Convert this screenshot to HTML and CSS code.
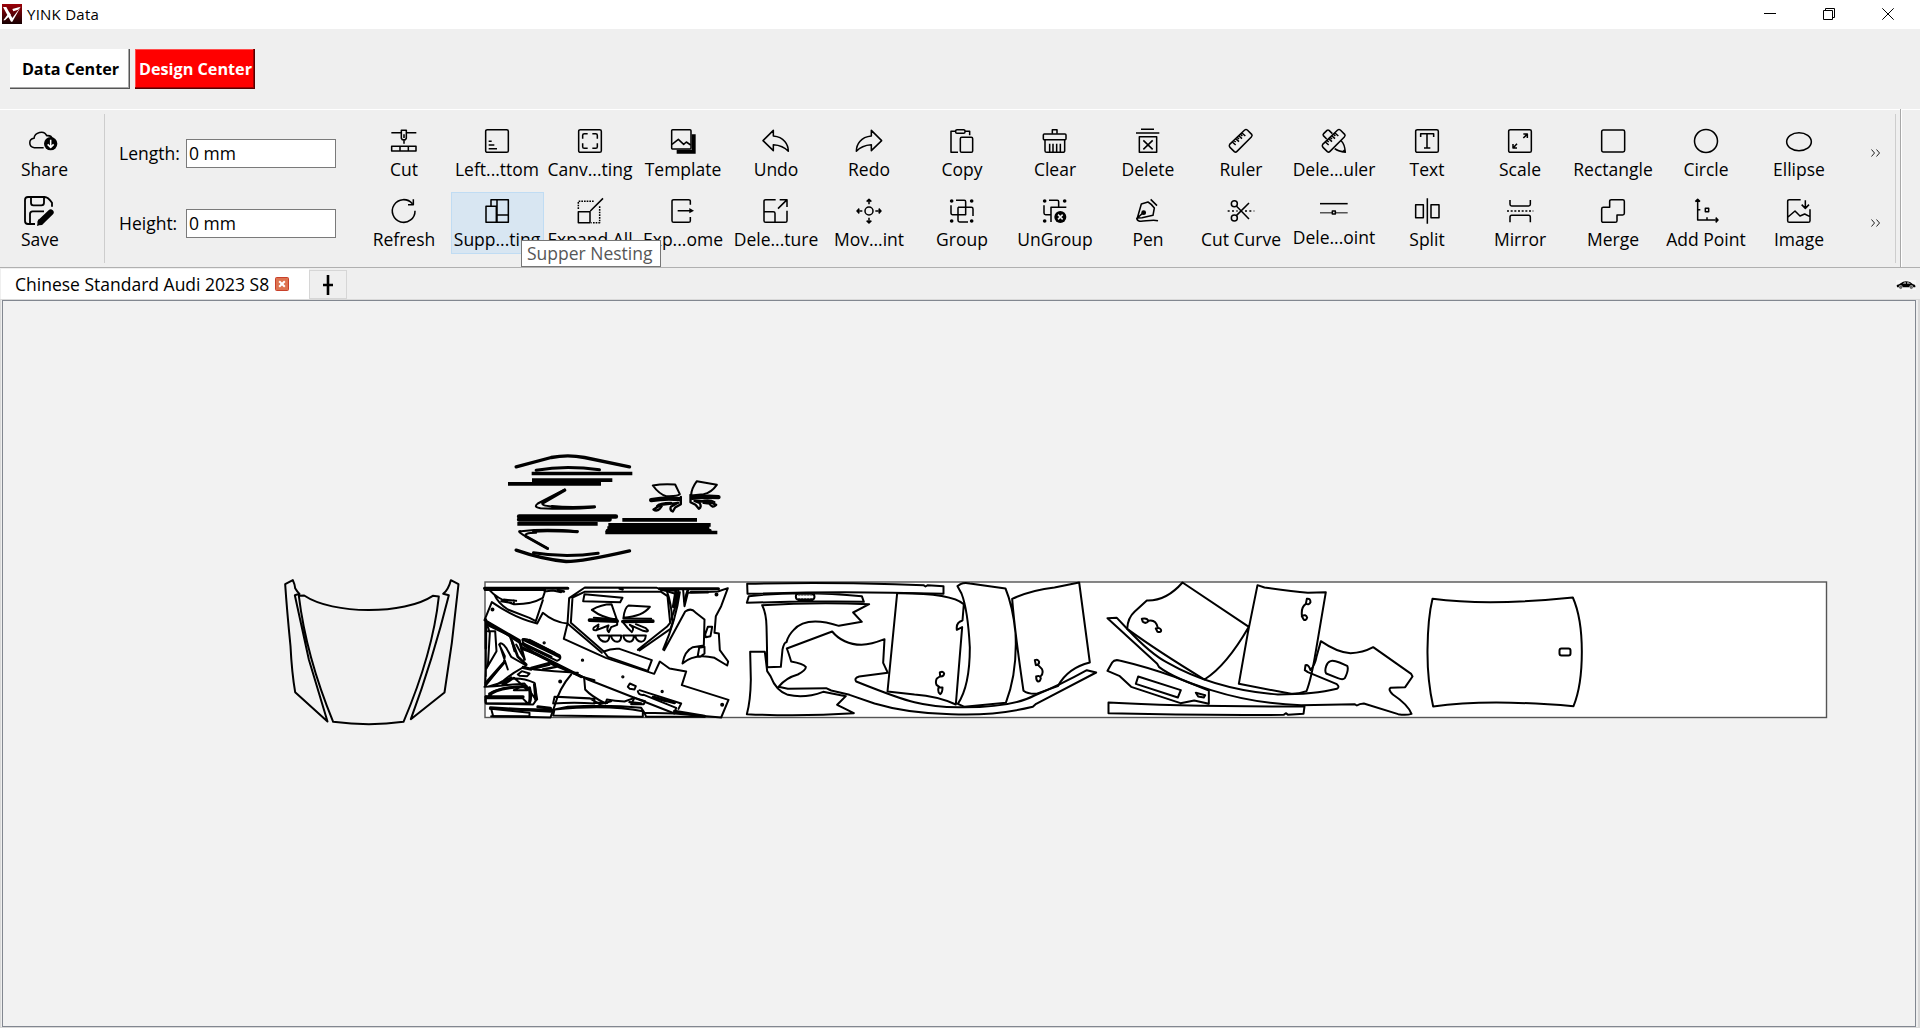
FILE: index.html
```html
<!DOCTYPE html>
<html lang="en">
<head>
<meta charset="utf-8">
<title>YINK Data</title>
<link rel="stylesheet" href="styles.css">
</head>
<body>
<header class="titlebar">
  <svg class="logo" viewBox="0 0 60 60"><defs><linearGradient id="lg" x2="0" y2="1"><stop stop-color="#9c0008"/><stop offset="1" stop-color="#160002"/></linearGradient></defs><rect width="60" height="60" fill="url(#lg)"/><path d="M3 9 L13 9 L31 42 L56 9 L31 53 L27 53Z M31 15 L56 8 L48 17 L34 22Z M22 25 L27 32 L9 49 L4 49Z" fill="#fff"/></svg>
  <span class="app-name">YINK Data</span>
  <div class="window-controls">
    <svg viewBox="0 0 12 12"><path d="M0 5.5H12"/></svg>
    <svg viewBox="0 0 12 12"><path d="M.5 2.5H9.5V11.5H.5ZM2.5 2.5V.5H11.5V9.5H9.5"/></svg>
    <svg viewBox="0 0 12 12"><path d="M.3 .3L11.7 11.7M11.7 .3L.3 11.7"/></svg>
  </div>
</header>
<nav class="modes">
  <button class="mode">Data Center</button>
  <button class="mode active">Design Center</button>
</nav>
<section class="toolbar">
  <div class="file-tools">
    <div class="file-tool share"><svg class="ico" viewBox="0 0 90 60"><path d="M44 50H16C-2 48 -2 24 15 22C17 4 45 -4 53 14C63 13 69 18 70 25"/><circle cx="65" cy="38" r="20" fill="#000" stroke="none"/><path d="M65 26V48M56 40L65 49L74 40" stroke="#fff"/></svg><span>Share</span></div>
    <div class="file-tool save"><svg class="ico" viewBox="0 0 90 90"><path d="M33 84H12Q3 84 3 75V12Q3 3 12 3H62Q72 3 84 20V32M21 4V20Q21 28 28 28H52Q60 28 60 20V4M18 83V54Q18 46 26 46H60" stroke-width="5.5"/><path d="M50 78L80 49" stroke-width="18" stroke-linecap="round"/><path d="M39 90L43 70L58 84Z" fill="#000" stroke="none"/></svg><span>Save</span></div>
  </div>
  <div class="dims">
    <label><span>Length:</span><input value="0 mm"></label>
    <label><span>Height:</span><input value="0 mm"></label>
  </div>
  <div class="tools">
    <div class="tool"><svg class="ico" viewBox="0 0 72 72"><path d="M-2 11H27M44 11H73M28 4H43V28L40 32H31L28 28ZM36 16V27M36 33V44M-1 52H72V66H-1ZM24 52V66M49 52V66"/></svg><span>Cut</span></div>
    <div class="tool"><svg class="ico" viewBox="0 0 72 72"><rect x="2" y="2" width="68" height="68" rx="5"/><path d="M11 37H20M11 48H28M11 59H36"/></svg><span>Left...ttom</span></div>
    <div class="tool"><svg class="ico" viewBox="0 0 72 72"><rect x="2" y="2" width="68" height="68" rx="5"/><path d="M14 29V19Q14 14 19 14H29M43 14H53Q58 14 58 19V29M58 43V53Q58 58 53 58H43M29 58H19Q14 58 14 53V43"/></svg><span>Canv...ting</span></div>
    <div class="tool"><svg class="ico" viewBox="0 0 72 72"><rect x="2" y="2" width="58" height="58" rx="3"/><path d="M3 46L22 31L38 46L46 39L59 48"/><path d="M62 16H74V74H17V62H62Z" fill="#000" stroke="none"/></svg><span>Template</span></div>
    <div class="tool"><svg class="ico" viewBox="0 0 72 72"><path d="M-3 35L28 4V21C60 24 73 46 73 67C60 52 45 48 28 47V65Z"/></svg><span>Undo</span></div>
    <div class="tool"><svg class="ico" viewBox="0 0 72 72"><path d="M74 35L43 4V21C11 24 -2 46 -2 67C11 52 26 48 43 47V65Z"/></svg><span>Redo</span></div>
    <div class="tool"><svg class="ico" viewBox="0 0 72 72"><path d="M24 70H3V7H17M45 7H59V19"/><rect x="17" y="2" width="28" height="11" rx="4"/><rect x="31" y="25" width="37" height="45" rx="4"/></svg><span>Copy</span></div>
    <div class="tool"><svg class="ico" viewBox="0 0 72 72"><path d="M28 14V2H42V14M6 32V65Q6 70 11 70H59Q65 70 65 65V32M20 44V68M30 44V68M41 44V68M52 44V68"/><rect x="1" y="15" width="68" height="17" rx="3"/></svg><span>Clear</span></div>
    <div class="tool"><svg class="ico" viewBox="0 0 72 72"><path d="M15 1H54M0 12H70M10 23H62V70H10ZM22 34L50 61M50 34L22 61"/></svg><span>Delete</span></div>
    <div class="tool"><svg class="ico" viewBox="0 0 72 72"><path d="M2 46L47 3Q51 0 55 3L68 16Q71 20 67 24L24 67Q20 71 16 68L3 55Q-1 51 2 46ZM10 39L20 48M20 29L30 38M30 21L39 29M39 12L49 21M15 34L20 39M25 25L30 30M35 16L40 21"/></svg><span>Ruler</span></div>
    <div class="tool"><svg class="ico" viewBox="0 0 72 72"><path d="M2 46L47 3Q51 0 55 3L68 16Q71 20 67 24L24 67Q20 71 16 68L3 55Q-1 51 2 46ZM10 39L20 48M20 29L30 38M30 21L39 29M39 12L49 21M15 34L20 39M25 25L30 30M35 16L40 21M14 30L4 20Q2 17 5 14L15 4Q18 2 21 4L31 14M58 36Q68 45 70 70Q50 68 38 59M61 70L70 61"/></svg><span>Dele...uler</span></div>
    <div class="tool"><svg class="ico" viewBox="0 0 72 72"><rect x="2" y="2" width="68" height="68" rx="5"/><path d="M17 24V14H56V24M36 14V57M27 57H46"/></svg><span>Text</span></div>
    <div class="tool"><svg class="ico" viewBox="0 0 72 72"><rect x="2" y="2" width="68" height="68" rx="5"/><path d="M46 27L57 16M46 15H58V27M27 44L16 56M15 45V57H27"/></svg><span>Scale</span></div>
    <div class="tool"><svg class="ico" viewBox="0 0 72 72"><rect x="2" y="3" width="69" height="66" rx="5"/></svg><span>Rectangle</span></div>
    <div class="tool"><svg class="ico" viewBox="0 0 72 72"><circle cx="36" cy="36" r="34.5"/></svg><span>Circle</span></div>
    <div class="tool"><svg class="ico" viewBox="0 0 72 72"><ellipse cx="36" cy="38" rx="37" ry="27"/></svg><span>Ellipse</span></div>

    <div class="tool"><svg class="ico" viewBox="0 0 72 72"><path d="M69 35A34 34 0 1 1 61 14M64 1V17H48"/></svg><span>Refresh</span></div>
    <div class="tool hover"><svg class="ico" viewBox="0 0 72 72"><path d="M18 22V2H70V70H3V22H34V70M36 2V70M36 48H70"/></svg><span>Supp...ting</span></div>
    <div class="tool"><svg class="ico" viewBox="0 0 72 72"><path d="M1 30V7H50M65 22V71H40" stroke-dasharray="5 3"/><path d="M1 38H36V71H1ZM37 36L75 -2"/></svg><span>Expand All</span></div>
    <div class="tool"><svg class="ico" viewBox="0 0 72 72"><path d="M58 17V7Q58 2 53 2H8Q3 2 3 7V65Q3 70 8 70H53Q58 70 58 65V54M20 35H60"/><path d="M55 27L69 35L55 43Z" fill="#000" stroke="none"/></svg><span>Exp...ome</span></div>
    <div class="tool"><svg class="ico" viewBox="0 0 72 72"><path d="M35 2H5Q0 2 0 7V65Q0 70 5 70H64Q69 70 69 65V35M1 38H28Q33 38 33 43V70M42 29L67 4M47 2H69V24"/></svg><span>Dele...ture</span></div>
    <div class="tool"><svg class="ico" viewBox="0 0 72 72"><circle cx="36" cy="36" r="12"/><path d="M36 16V2M29 8L36 1L43 8M36 56V71M29 65L36 72L43 65M16 36H1M7 29L0 36L7 43M55 36H71M65 29L72 36L65 43"/></svg><span>Mov...int</span></div>
    <div class="tool"><svg class="ico" viewBox="0 0 72 72"><path d="M18 4H43Q47 4 47 8V47H8Q3 47 3 42V19M24 25H64Q69 25 69 30V51M24 25V64Q24 69 29 69H54"/><g fill="#000" stroke="none"><circle cx="5" cy="6" r="5.500"/><circle cx="65" cy="6" r="5.500"/><circle cx="5" cy="66" r="5.500"/><circle cx="65" cy="66" r="5.500"/></g></svg><span>Group</span></div>
    <div class="tool"><svg class="ico" viewBox="0 0 72 72"><path d="M18 4H43Q47 4 47 8V25M3 19V42Q3 47 8 47H24M24 69V25H70"/><g fill="#000" stroke="none"><circle cx="5" cy="6" r="5.500"/><circle cx="65" cy="6" r="5.500"/><circle cx="5" cy="66" r="5.500"/><circle cx="52" cy="54" r="18"/></g><path d="M45 47L59 61M59 47L45 61" stroke="#efefef"/></svg><span>UnGroup</span></div>
    <div class="tool"><svg class="ico" viewBox="0 0 72 72"><path d="M4 57L16 15L36 9Q45 14 55 27L51 49L18 56ZM4 57L22 41M44 1L63 20M2 56C4 79 37 58 66 65"/><circle cx="23" cy="41" r="5" fill="#000"/></svg><span>Pen</span></div>
    <div class="tool"><svg class="ico" viewBox="0 0 72 72"><circle cx="16" cy="14" r="9"/><circle cx="16" cy="57" r="9"/><path d="M22 21L60 60M22 50L60 12"/><path d="M-4 36H26M48 36H76" stroke-dasharray="6 7"/></svg><span>Cut Curve</span></div>
    <div class="tool raised"><svg class="ico" viewBox="0 0 72 72"><path d="M-6 14H77" /><path d="M-6 41H31M41 41H77" stroke="#555"/><rect x="31" y="36" width="9" height="9"/></svg><span>Dele...oint</span></div>
    <div class="tool"><svg class="ico" viewBox="0 0 72 72"><path d="M2 17H25V56H2ZM48 17H72V56H48ZM37 -2V74"/></svg><span>Split</span></div>
    <div class="tool"><svg class="ico" viewBox="0 0 72 72"><path d="M6 3V16Q6 21 11 21H62Q67 21 67 16V3M6 70V55Q6 49 11 49H62Q67 49 67 55V70"/><path d="M-3 36H76" stroke-dasharray="6 5"/></svg><span>Mirror</span></div>
    <div class="tool"><svg class="ico" viewBox="0 0 72 72"><path d="M26 25V7Q26 2 31 2H65Q70 2 70 7V43Q70 48 65 48H48V65Q48 70 43 70H7Q2 70 2 65V30Q2 25 7 25Z"/></svg><span>Merge</span></div>
    <div class="tool"><svg class="ico" viewBox="0 0 72 72"><path d="M11 2V63H71M4 8L11 1L18 8M65 56L72 63L65 70M11 32H19M39 55V62M34 28H44V38H34Z"/></svg><span>Add Point</span></div>
    <div class="tool"><svg class="ico" viewBox="0 0 72 72"><path d="M41 2H7Q2 2 2 7V65Q2 70 7 70H64Q69 70 69 65V31M3 54L24 36L39 51L53 45L69 53M55 4V27M44 17L55 28L66 17"/></svg><span>Image</span></div>
    <div class="tooltip">Supper Nesting</div>
  </div>
  <div class="more"><svg viewBox="0 0 9 8"><path d="M.5 .5L3.500 4L.5 7.500M5.500 .5L8.500 4L5.500 7.500"/></svg><svg viewBox="0 0 9 8"><path d="M.5 .5L3.500 4L.5 7.500M5.500 .5L8.500 4L5.500 7.500"/></svg></div>
</section>
<div class="tabs">
  <div class="tab"><span>Chinese Standard Audi 2023 S8</span><svg viewBox="0 0 14 14"><rect x=".5" y=".5" width="13" height="13" rx="1" fill="#dd7350" stroke="#c8402a"/><path d="M4.200 4.200L9.800 9.800M9.800 4.200L4.200 9.800" stroke="#fff" stroke-width="2"/></svg></div>
  <div class="new-tab"><svg viewBox="0 0 12 22"><path d="M6 1V21M1 11H11" stroke="#000" stroke-width="2.600"/></svg></div>
  <svg class="car" viewBox="0 0 60 30"><rect width="60" height="30" fill="#f7f7f7"/><path d="M2 15Q10 13 15 9Q24 1 42 6L51 13Q60 14 58 22H52A6 6 0 0 0 40 22H20A6 6 0 0 0 8 22H3Z" fill="#000"/><path d="M20 11L25 7H30V11ZM33 7H38L44 11H33Z" fill="#aaa"/><circle cx="14" cy="22" r="4" fill="#777" stroke="#000"/><circle cx="46" cy="22" r="4" fill="#777" stroke="#000"/></svg>
</div>
<main class="pane">
<svg class="canvas" viewBox="3 301 1912 725">
  <rect x="485" y="582" width="1341.500" height="135.500" fill="#fff" stroke="#555" stroke-width="1.400"/>
  <!-- hood and fenders -->
  <g class="art" transform="translate(269.500 559.500) scale(.33333)">
    <path d="M47 74L70 62Q76 75 77 86Q82 95 90 103L76 107L118 300L174 486L77 398Q67 340 63 260Q52 150 47 74ZM88 109L104 108C190 166 404 166 490 109L508 111Q490 280 402 487Q300 501 191 487Q110 290 88 109ZM544 62L567 74L547 250L525 399L424 479Q490 300 538 107L521 103Q537 90 544 62Z"/>
  </g>
  <!-- loose trim strips -->
  <g class="art" transform="translate(479.500 439.500) scale(.33333)">
    <path stroke-width="10" d="M110 82L215 54Q265 44 315 54L450 82M110 332Q190 360 260 366Q310 366 450 334"/>
    <path stroke-width="9" d="M170 92Q260 77 360 91M162 340Q260 356 356 341"/>
    <path stroke-width="11" stroke-linecap="square" d="M162 102H453M163 122H393M91 133H359M119 253H349M434 241H647M392 256H688M389 266H684M383 279H708"/>
    <path stroke-width="14" d="M119 231H409M119 240H390M385 275H690"/>
    <path stroke-width="9" d="M256 152L190 190M345 202Q270 207 218 201M140 291L204 327M293 277Q210 272 162 275"/>
    <path d="M256 150L175 192Q160 203 183 206Q280 211 345 203M190 190Q182 198 218 201M205 327L132 287Q110 273 125 275Q200 267 295 275M140 291Q130 280 170 280M520 138Q550 132 587 135L601 164Q596 171 560 170Q539 164 520 138ZM652 125L712 136Q695 160 672 164L635 168Q635 148 652 125Z"/>
    <path stroke-width="13" d="M515 182Q560 174 600 179M717 173Q680 170 638 175"/>
    <path stroke-width="7" d="M604 172V194L587 204L580 216Q570 212 574 202L596 190L545 196L522 210Q535 220 548 198M633 166V188L648 196L658 208Q668 202 660 190L645 184L688 186L710 196Q698 208 690 192L672 190"/>
    <path d="M532 200Q540 190 575 190M664 186Q690 178 705 188"/>
  </g>
  <!-- dense nest -->
  <g class="art" transform="translate(474.500 569.500) scale(.33333)">
    <path stroke-width="9" d="M30 56H280M32 60H210M555 58H732M560 61L606 62"/>
    <path d="M52 98L30 152L180 249L340 330L600 432L740 444L762 391L622 347L635 306L585 297L556 276L539 313L394 265L268 208L279 162Q240 160 205 130L188 162Q120 145 52 98Z"/>
    <path d="M45 62Q70 90 118 104Q170 105 205 85L212 64M60 76Q70 100 100 120L165 145L184 155L205 92M80 95L110 100M118 92V104M88 90L125 94M210 66L235 63L260 68"/>
    <path stroke-width="8" d="M250 62L268 66M34 150V236M35 155L135 213M135 215L150 270M108 203L130 262L155 285M146 210L255 262M145 222L230 262M140 232L320 322M165 212L240 250M38 165L120 205"/>
    <path d="M144 210Q142 220 160 232L248 274Q262 268 256 258L170 214Q150 205 144 210ZM140 238Q180 250 245 285Q290 315 360 332M125 225L145 260M112 215L120 245"/>
    <path d="M284 86L331 54L547 55L577 65Q591 100 594 160L588 178L495 243M284 86L279 162L382 250M294 84L330 67H435H560L579 80L587 160L577 172L490 241M294 84L289 160L388 246M435 58L445 60"/>
    <path d="M330 74L444 85L437 98L326 95ZM352 121Q380 104 411 104L427 150Q385 146 352 121ZM447 145Q450 115 462 108L526 112Q505 140 447 145ZM370 198H405Q404 216 392 217Q378 217 370 198ZM409 198H440Q440 216 428 217Q414 216 409 198ZM446 198H478Q478 216 465 217Q450 216 446 198ZM482 198H514Q512 216 500 217Q486 216 482 198Z"/>
    <path stroke-width="11" d="M345 152L428 155M535 155L445 156"/>
    <path stroke-width="6" d="M358 145L425 149M530 148L447 147M428 155V166L410 173L403 188Q395 182 402 168L366 182Q352 184 358 174L372 165M447 160L460 176L472 188Q482 176 466 166L506 184Q530 190 514 176L484 164M366 182L372 170"/>
    <path d="M388 246Q410 236 435 238L532 272L520 304L400 262ZM329 325L332 360Q350 380 393 402L397 390Q420 394 450 396L480 385M290 315Q255 355 240 410L228 444L50 440M46 418L232 420"/>
    <path d="M612 62Q605 110 590 150M616 68Q605 150 566 240M600 72L580 66M569 242L632 126Q650 114 662 128L690 150L688 228L655 233Q630 245 624 282Q660 250 720 265L758 288L761 276L736 242L733 192L720 190L724 140L740 110L760 56L730 66L640 70L630 110L626 62M692 195L700 172H713L708 200L694 203ZM670 258L674 235L690 232V252L677 262Z" />
    <path stroke-width="8" d="M604 64L596 112M640 62L630 95M610 70L600 110M650 68H700"/>
    <path d="M62 185L66 245L34 300L32 350L88 280L91 260L74 225Q80 215 95 235L110 262L155 288L118 310Q90 330 80 340L40 352M40 185H62M40 172L46 190L40 290M34 238V320M75 225L100 300M30 352L60 350Q120 345 150 342L185 392L176 405L36 402Q30 398 34 380M60 350Q110 310 180 340L188 390M90 345L118 325L145 348L158 362H118L138 352"/>
    <path stroke-width="9" d="M35 340L88 280M34 382H146M48 415L230 425M44 378Q60 355 155 350M190 412L228 416M85 343L110 325M540 384L600 400M600 425L690 440M165 355Q172 380 165 400M180 345L184 390"/>
    <path d="M34 386V402H160L144 386ZM44 372Q90 345 165 355V400M130 315L142 305L165 312L158 320L135 319ZM50 418L56 440H165V430L50 418M240 382L236 402Q300 398 360 402V388ZM240 420L236 438L505 442V425Q400 405 240 420ZM240 420L280 412Q400 405 500 415L510 430L600 432M510 430L515 442H690M248 382L345 386L375 404L410 395M170 295L225 280L240 288L320 320M145 292L180 300L240 305L310 310M490 365Q492 378 508 376L605 415L600 432M495 362L620 402L612 418M480 385L512 395L508 404H470Z"/>
    <path stroke-width="7" d="M175 298L225 285M205 300L245 292M360 400L398 400M145 295L170 300M465 398L500 402M535 382L575 395"/>
    <path d="M460 352L466 342L484 350L480 360L466 358Z"/>
    <g fill="#000"><circle cx="54" cy="120" r="3"/><circle cx="209" cy="220" r="2"/><circle cx="324" cy="272" r="2"/><circle cx="445" cy="322" r="2"/><circle cx="563" cy="366" r="2"/><circle cx="743" cy="406" r="3"/><circle cx="257" cy="336" r="3"/><circle cx="726" cy="75" r="3"/></g>
  </g>
  <!-- doors and quarter panels -->
  <g class="art" transform="translate(734.500 569.500) scale(.33333)">
    <path d="M38 43Q250 38 480 44L567 47L573 51L580 47L627 50V73Q400 66 215 69L39 73ZM43 80Q200 62 382 80L388 97L220 95L37 100ZM190 73H232Q240 75 240 82Q240 90 232 91H192Q184 90 184 82Q184 74 190 73Z"/>
    <path stroke-width="2" stroke-dasharray="5 4" d="M192 77H233M192 87H233"/>
    <path d="M83 107Q240 98 404 104L356 129L382 157L313 169Q215 138 177 182Q161 198 156 218Q149 217 144 240L139 292L98 293Q98 240 96 170Q95 130 83 107ZM157 237L293 186Q325 225 381 226Q410 225 450 209L446 280L460 310L374 321Q358 325 365 336Q500 390 540 398Q600 413 672 413Q830 415 900 378Q980 345 1057 302L1085 309L905 403L895 412Q780 440 650 434Q520 432 420 402L345 376L290 363L275 356L160 358L132 352Q154 325 190 315Q215 302 214 292Q205 282 170 276Q162 250 157 237ZM47 247H91L98 305L108 320Q125 365 160 376Q210 388 266 367L334 380L308 406L358 431Q200 442 37 434Q48 395 49 330Z"/>
    <path d="M488 71Q650 70 688 104L684 153Q664 158 667 181L683 173L664 405Q610 380 540 375L459 366ZM678 44Q690 38 706 42L813 57Q835 110 843 190Q849 310 814 400L690 412L670 403Q706 350 706 234Q700 120 681 72L669 50ZM833 88Q890 62 960 54L1034 39L1066 279Q1000 295 970 350L905 373Q880 374 867 364Q840 180 833 88Z"/>
    <path d="M616 309Q626 304 629 312Q628 322 617 321ZM616 321L607 327Q602 337 606 346L614 352M612 354H624Q624 370 617 374Q609 370 612 354ZM901 272Q910 268 914 277Q914 287 904 287ZM911 287L922 298Q928 310 919 320M905 321Q916 316 919 326Q917 337 910 336Q905 333 905 321Z"/>
  </g>
  <g class="art" transform="translate(1094.500 569.500) scale(.33333)">
    <path d="M39 146L67 145L100 180Q170 255 220 280Q360 360 550 375Q660 375 727 358Q737 352 727 344L640 308L631 302L633 287Q642 284 648 302Q662 285 666 262L679 215Q730 250 768 251Q805 250 836 233L950 313L954 321L932 353L888 355Q880 360 895 375Q940 405 951 433Q935 438 911 434L808 402Q795 403 787 408L780 404Q700 405 620 407Q480 403 350 362Q240 328 194 293L188 283Z"/>
    <path d="M264 39L463 172Q395 290 330 330Q190 245 98 178Q100 145 120 127L157 93Q215 95 264 39ZM489 47L510 54Q590 65 640 70L694 68L664 245Q650 330 636 365Q610 374 590 373L433 343L460 190ZM39 304L53 279Q60 269 75 273Q160 293 240 322L343 363V403L299 393L258 401L110 352L76 320ZM131 321L259 362L250 384L124 343ZM304 370L332 377L328 384L311 381ZM42 399Q250 411 630 411L627 433L581 436L574 431L568 436Q300 438 42 431ZM708 275Q716 272 735 279L758 289Q764 300 751 326Q745 332 730 326L695 312Q690 305 695 290Q699 278 708 275Z"/>
    <path d="M142 148Q158 144 162 155Q154 164 145 157ZM162 154Q184 149 190 175M184 177Q196 172 200 182Q200 190 189 187ZM637 88Q648 86 648 98Q645 107 634 103ZM634 103Q620 112 622 136M622 140Q634 133 638 144Q635 154 628 151Z"/>
  </g>
  <!-- roof -->
  <g class="art" transform="translate(1399.500 569.500) scale(.33333)">
    <path d="M99 88Q270 110 520 84Q547 145 547 247Q547 350 522 410Q260 388 101 411Q83 330 84 240Q85 145 99 88Z"/><rect x="480" y="237" width="33" height="21" rx="6"/>
  </g>
</svg>
</main>
</body>
</html>
```
FILE: styles.css
```css
* { box-sizing: border-box; }
body {
  margin: 0; width: 1920px; height: 1028px; overflow: hidden;
  display: flex; flex-direction: column;
  background: #efefef; color: #000;
  font: 17.5px/24px "Open Sans", "Noto Sans", sans-serif;
}
.titlebar { height: 29px; flex: none; background: #fff; display: flex; align-items: center; padding: 0 26px 1px 2px; }
.logo { width: 20px; height: 20px; }
.app-name { font-size: 15px; letter-spacing: .25px; margin-left: 5px; }
.window-controls { margin-left: auto; display: flex; gap: 47px; }
.window-controls svg { width: 12px; height: 12px; fill: none; stroke: #000; stroke-width: 1; }
.modes { height: 81px; flex: none; padding: 20px 10px; display: flex; gap: 5px; border-bottom: 1px solid #fff; }
.mode {
  width: 120px; height: 40px; padding: 0 0 0 2px; background: #fff; border: 0;
  border-right: 1px solid #555; border-bottom: 1px solid #555;
  box-shadow: inset -1px -1px #a8a8a8;
  font: bold 16.2px/38px "Open Sans", "Noto Sans", sans-serif; color: #000; white-space: nowrap;
}
.mode.active { background: #f00; color: #fff; border-color: #500; box-shadow: inset -1px -1px #a00000, inset 1px 1px #ff4d4d; }
.toolbar { height: 158px; flex: none; display: flex; border-bottom: 1px solid #b0b0b0; padding: 4px 0; }
.ico { display: block; overflow: visible; fill: none; stroke: #000; stroke-width: 4.6; stroke-linejoin: round; }
.file-tools { width: 105px; border-right: 1px solid #cdcdcd; padding: 8px 0 0 21px; }
.file-tool { height: 70px; display: flex; flex-direction: column; }
.share .ico { width: 30px; height: 20px; margin: 9px 0 6px 8px; }
.save .ico { width: 30px; height: 30px; margin: 4px 0 1px 3px; }
.dims { width: 253px; padding: 25px 0 0 14px; display: flex; flex-direction: column; gap: 41px; }
.dims label { display: flex; height: 29px; align-items: center; }
.dims label span { width: 67px; padding-bottom: 1px; }
.dims input { width: 150px; height: 29px; padding: 0 2px 1px; border: 1px solid #7a7a7a; background: #fff; font: inherit; color: #000; }
.tools { position: relative; display: grid; grid-template-columns: repeat(16, 93px); grid-template-rows: 62px 62px; row-gap: 8px; padding-top: 8px; }
.tool { padding: 7px 1px 0 0; display: flex; flex-direction: column; align-items: center; white-space: nowrap; }
.tool .ico { width: 24px; height: 24px; flex: none; margin-bottom: 4px; }
.tool.hover { background: #d8e6f2; box-shadow: inset 0 0 0 1px #c0dcf3; }
.tool.raised .ico { margin-bottom: 2px; }
.tooltip {
  position: absolute; left: 163px; top: 126px; width: 140px; height: 27px;
  background: #fff; border: 1px solid #767676; color: #575757; padding-left: 5px; line-height: 25px; white-space: nowrap;
}
.more { flex: none; width: 50px; border-right: 1px solid #cdcdcd; padding: 35px 0 0 25px; display: flex; flex-direction: column; gap: 62px; position: relative; }
.more svg { width: 9px; height: 8px; fill: none; stroke: #222; stroke-width: 1; }
.more::after { content: ""; position: absolute; right: -7px; top: -5px; width: 2px; height: 158px; background: linear-gradient(90deg, #a8a8a8 50%, #fff 50%); }
.tabs { height: 31px; flex: none; display: flex; padding-left: 1px; }
.tab { width: 308px; margin-top: 1px; background: #fff; display: flex; align-items: center; padding: 0 0 1px 14px; gap: 6px; white-space: nowrap; }
.tab svg { width: 14px; height: 14px; }
.new-tab { width: 38px; height: 29px; margin-top: 2px; border: 1px solid #d6d6d6; display: grid; place-items: center; }
.new-tab svg { width: 12px; height: 22px; }
.car { width: 20px; height: 10px; margin: 12px 4px 0 auto; }
.pane { flex: 1; min-height: 0; border: 1px solid #d9d9d9; border-width: 1px 2px 1px 1px; padding: 0 0 0 1px; }
.canvas { display: block; width: 1914px; height: 727px; border: 1px solid #828790; background: #f2f2f2; }
.art { fill: none; stroke: #000; stroke-width: 6; stroke-linejoin: round; stroke-linecap: round; }
```
